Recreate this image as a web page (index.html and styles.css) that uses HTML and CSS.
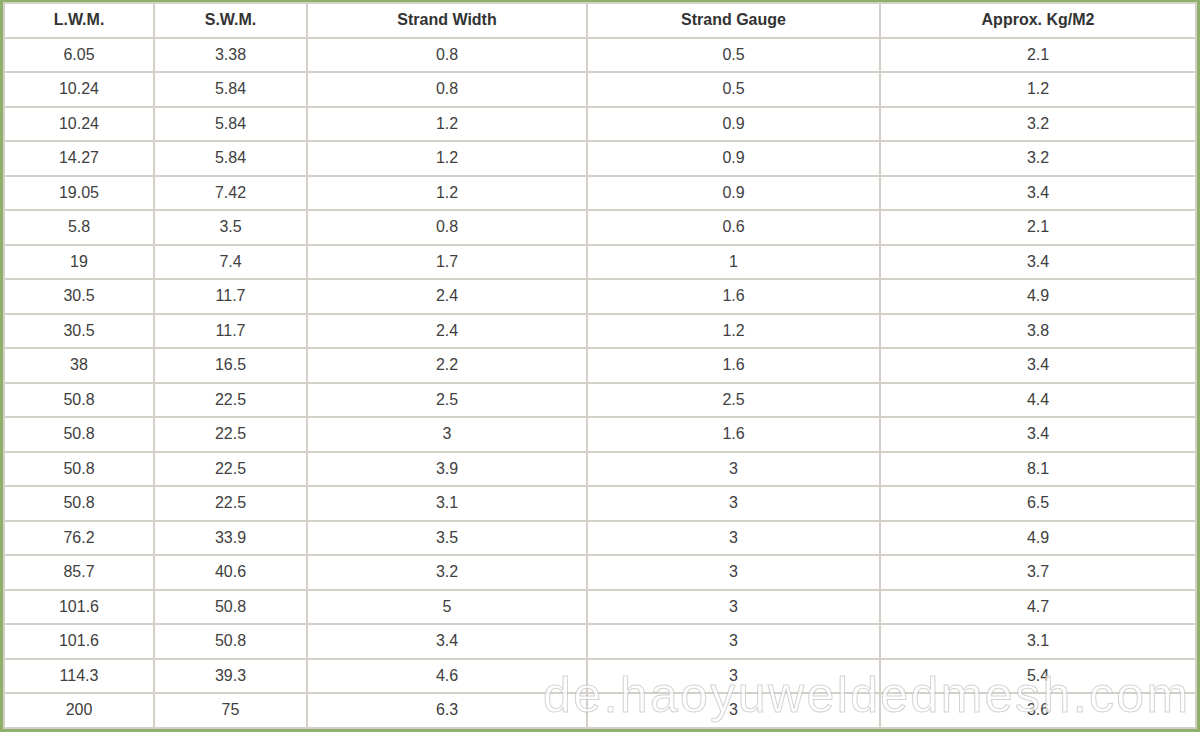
FILE: index.html
```html
<!DOCTYPE html>
<html>
<head>
<meta charset="utf-8">
<link rel="stylesheet" href="styles.css">
</head>
<body>
<div class="frame">
<table class="spec">
<colgroup><col class="c1"><col class="c2"><col class="c3"><col class="c4"><col class="c5"></colgroup>
<thead>
<tr><th>L.W.M.</th><th>S.W.M.</th><th>Strand Width</th><th>Strand Gauge</th><th>Approx. Kg/M2</th></tr>
</thead>
<tbody>
<tr><td>6.05</td><td>3.38</td><td>0.8</td><td>0.5</td><td>2.1</td></tr>
<tr><td>10.24</td><td>5.84</td><td>0.8</td><td>0.5</td><td>1.2</td></tr>
<tr><td>10.24</td><td>5.84</td><td>1.2</td><td>0.9</td><td>3.2</td></tr>
<tr><td>14.27</td><td>5.84</td><td>1.2</td><td>0.9</td><td>3.2</td></tr>
<tr><td>19.05</td><td>7.42</td><td>1.2</td><td>0.9</td><td>3.4</td></tr>
<tr><td>5.8</td><td>3.5</td><td>0.8</td><td>0.6</td><td>2.1</td></tr>
<tr><td>19</td><td>7.4</td><td>1.7</td><td>1</td><td>3.4</td></tr>
<tr><td>30.5</td><td>11.7</td><td>2.4</td><td>1.6</td><td>4.9</td></tr>
<tr><td>30.5</td><td>11.7</td><td>2.4</td><td>1.2</td><td>3.8</td></tr>
<tr><td>38</td><td>16.5</td><td>2.2</td><td>1.6</td><td>3.4</td></tr>
<tr><td>50.8</td><td>22.5</td><td>2.5</td><td>2.5</td><td>4.4</td></tr>
<tr><td>50.8</td><td>22.5</td><td>3</td><td>1.6</td><td>3.4</td></tr>
<tr><td>50.8</td><td>22.5</td><td>3.9</td><td>3</td><td>8.1</td></tr>
<tr><td>50.8</td><td>22.5</td><td>3.1</td><td>3</td><td>6.5</td></tr>
<tr><td>76.2</td><td>33.9</td><td>3.5</td><td>3</td><td>4.9</td></tr>
<tr><td>85.7</td><td>40.6</td><td>3.2</td><td>3</td><td>3.7</td></tr>
<tr><td>101.6</td><td>50.8</td><td>5</td><td>3</td><td>4.7</td></tr>
<tr><td>101.6</td><td>50.8</td><td>3.4</td><td>3</td><td>3.1</td></tr>
<tr><td>114.3</td><td>39.3</td><td>4.6</td><td>3</td><td>5.4</td></tr>
<tr><td>200</td><td>75</td><td>6.3</td><td>3</td><td>3.6</td></tr>
</tbody>
</table>
<div class="watermark">de.haoyuweldedmesh.com</div>
</div>
</body>
</html>
```

FILE: styles.css
```css
html, body {
  margin: 0;
  padding: 0;
  background: #ffffff;
}
.frame {
  position: relative;
  box-sizing: border-box;
  width: 1200px;
  height: 732px;
  border: 3px solid #8fb06b;
  border-top-width: 2px;
  background: #ffffff;
  overflow: hidden;
}
.spec {
  width: 100%;
  table-layout: fixed;
  border-collapse: separate;
  border-spacing: 0;
  border: 1px solid #d4d0c8;
  font-family: "Liberation Sans", Arial, sans-serif;
  font-size: 16px;
  color: #404040;
}
.spec tr {
  height: 34.5px;
}
.c1 { width: 150px; }
.c2 { width: 153px; }
.c3 { width: 280px; }
.c4 { width: 293px; }
.c5 { width: auto; }
.spec th, .spec td {
  border: 1px solid #d4d0c8;
  padding: 0;
  text-align: center;
  vertical-align: middle;
  line-height: 18px;
}
.spec th {
  font-weight: bold;
  color: #333333;
}
.watermark {
  position: absolute;
  left: 540px;
  top: 663px;
  font-family: "Liberation Sans", Arial, sans-serif;
  font-size: 50px;
  letter-spacing: 2.4px;
  line-height: 60px;
  color: rgba(255, 255, 255, 0.75);
  -webkit-text-stroke: 1px rgba(175, 175, 175, 0.55);
  white-space: nowrap;
  pointer-events: none;
}
```
